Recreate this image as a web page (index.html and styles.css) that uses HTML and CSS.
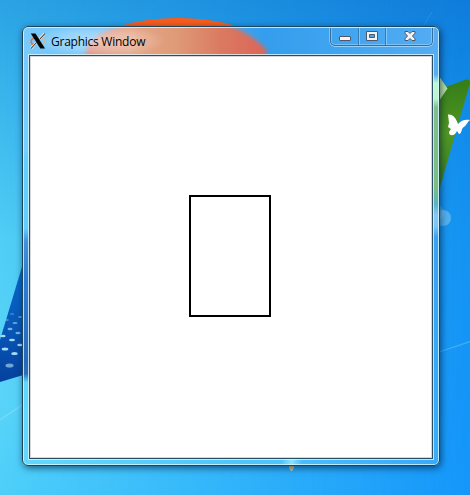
FILE: index.html
```html
<!DOCTYPE html>
<html lang="en">
<head>
<meta charset="utf-8">
<title>Graphics Window</title>
<link rel="stylesheet" href="styles.css">
</head>
<body>
<main class="desktop">
  <svg class="wallpaper" viewBox="0 0 470 495" aria-hidden="true">
    <defs>
      <filter id="soft" x="-50%" y="-50%" width="200%" height="200%"><feGaussianBlur stdDeviation=".6"/></filter>
      <linearGradient id="navy" x1="0" y1="0" x2="0" y2="1"><stop offset="0" stop-color="#0872d2"/><stop offset=".6" stop-color="#0758b9"/><stop offset="1" stop-color="#06419e"/></linearGradient>
      <linearGradient id="leaf" x1="0" y1="0" x2="0" y2="1"><stop offset="0" stop-color="#347d18"/><stop offset=".5" stop-color="#519723"/><stop offset="1" stop-color="#397e20"/></linearGradient>
    </defs>
    <ellipse cx="178" cy="53" rx="91" ry="35" fill="#f95c1c"/>
    <path d="M30 240 0 340v42l30-9z" fill="url(#navy)"/>
    <g fill="#a4daf3" filter="url(#soft)">
      <ellipse cx="12" cy="314" rx="2.2" ry="1" opacity=".3"/><ellipse cx="20" cy="317" rx="2" ry="1" opacity=".5"/>
      <ellipse cx="7" cy="320" rx="2" ry="1" opacity=".4"/><ellipse cx="15" cy="323" rx="2.5" ry="1" opacity=".6"/>
      <ellipse cx="10" cy="329" rx="2.5" ry="1.2" opacity=".7"/><ellipse cx="18" cy="333" rx="2.6" ry="1.2" opacity=".7"/>
      <ellipse cx="3" cy="336" rx="2.6" ry="1.2"/><ellipse cx="12" cy="340" rx="3" ry="1.3"/>
      <ellipse cx="20" cy="345" rx="2.8" ry="1.3"/><ellipse cx="5" cy="349" rx="3.3" ry="1.5"/>
      <ellipse cx="14.500" cy="353.500" rx="3.200" ry="1.600"/><ellipse cx="9.500" cy="365.500" rx="4" ry="2" opacity=".65"/>
    </g>
    <path d="M0 420 22 405" stroke="#a6e8fb" stroke-width="1.500" opacity=".35"/>
    <path d="M440 89 466 79.500Q470 79 470 83L440 187z" fill="url(#leaf)"/>
    <path d="M439 76 447.500 88.500 439 101z" fill="#b8e29c"/>
    <path d="M448 114.500C453 114 456 118 458 124 461 120 466 119 470 120 467 122 467 125 464 127 461 128 462 134 459 134L457 131C455 136 449 137 449 132L451 129 448 127 449 123z" fill="#fff"/>
    <circle cx="435" cy="213" r="9" fill="#8dceed" opacity=".35"/><circle cx="443" cy="218" r="8" fill="#8dceed" opacity=".5"/>
    <path d="M439 352 470 341.500" stroke="#6cc6fa" stroke-width="1.300" opacity=".5"/>
    <path d="M424 25 432 12" stroke="#76c4f3" opacity=".2"/>
    <path d="M289 465h5v3l-2 3h-1l-2-3z" fill="#d8c98c"/>
  </svg>

  <section class="window">
    <svg class="glass" viewBox="22 26 418 440" aria-hidden="true">
      <defs>
        <linearGradient id="top" x2="1"><stop offset="0" stop-color="#78c9fb"/><stop offset=".3" stop-color="#69bdf5"/><stop offset=".58" stop-color="#349ded"/><stop offset=".8" stop-color="#43a6f1"/><stop offset="1" stop-color="#55acf2"/></linearGradient>
        <linearGradient id="left" x2="0" y2="1"><stop offset="0" stop-color="#78c9fb"/><stop offset=".28" stop-color="#75d0ff"/><stop offset=".3" stop-color="#62d0fb"/><stop offset=".46" stop-color="#61cffc"/><stop offset=".49" stop-color="#4390dc"/><stop offset=".57" stop-color="#2f7ed3"/><stop offset=".76" stop-color="#2968b9"/><stop offset=".79" stop-color="#2b6dbd"/><stop offset=".81" stop-color="#60d6fb"/><stop offset="1" stop-color="#65d8fb"/></linearGradient>
        <linearGradient id="right" x2="0" y2="1"><stop offset="0" stop-color="#55acf2"/><stop offset=".11" stop-color="#57adf2"/><stop offset=".13" stop-color="#bcf8d6"/><stop offset=".165" stop-color="#b8f6ca"/><stop offset=".185" stop-color="#82bd8f"/><stop offset=".37" stop-color="#7abc83"/><stop offset=".405" stop-color="#56b4c3"/><stop offset=".43" stop-color="#83c9f6"/><stop offset=".455" stop-color="#7bc5f7"/><stop offset=".48" stop-color="#39a2f2"/><stop offset="1" stop-color="#39adfb"/></linearGradient>
        <linearGradient id="bottom" x2="1"><stop offset="0" stop-color="#65d8fb"/><stop offset=".55" stop-color="#4dc5fb"/><stop offset=".62" stop-color="#4dc4fb"/><stop offset=".645" stop-color="#8be2ff"/><stop offset=".67" stop-color="#48bdfc"/><stop offset="1" stop-color="#39a9fa"/></linearGradient>
        <linearGradient id="sun" x2="1"><stop offset="0" stop-color="#dc8573"/><stop offset=".25" stop-color="#e5a688"/><stop offset=".5" stop-color="#df9b78"/><stop offset=".75" stop-color="#db7961"/><stop offset="1" stop-color="#dc6557"/></linearGradient>
        <radialGradient id="glow"><stop offset="0" stop-color="#fff" stop-opacity=".48"/><stop offset=".6" stop-color="#fff" stop-opacity=".25"/><stop offset="1" stop-color="#fff" stop-opacity="0"/></radialGradient>
        <filter id="blur"><feGaussianBlur stdDeviation="2.200"/></filter>
        <clipPath id="bar"><path d="M22 26h418v29H22z"/></clipPath>
      </defs>
      <path d="M22 26h418v30H22z" fill="url(#top)"/>
      <path d="M22 26h8v440h-8z" fill="url(#left)"/>
      <path d="M432 26h8v440h-8z" fill="url(#right)"/>
      <path d="M22 458h418v8H22z" fill="url(#bottom)"/>
      <g clip-path="url(#bar)">
        <path d="M84 60Q87 37 112 29Q178 5 238 29Q256 38 267 50L264 60z" fill="url(#sun)" filter="url(#blur)"/>
        <ellipse cx="99" cy="41" rx="66" ry="17" fill="url(#glow)"/>
      </g>
    </svg>

    <header class="titlebar">
      <svg class="app-icon" viewBox="0 0 16 16" aria-hidden="true">
        <path d="M5.500 4.500C-.5 6 0 12 5.500 12" fill="none" stroke="#ed6c3d" stroke-width="1.500"/>
        <path d="M11 4.500C16.500 6 15.500 11 9 12.500" fill="none" stroke="#d8b98a" stroke-width="1.200"/>
        <path d="M14.500.5 9 7M6.500 9.500 1 15.500" stroke="#eee" stroke-width="2.500"/>
        <path d="M15 .5 9.500 6.500M6.500 9.500 1 15.500" stroke="#333" stroke-width="1.100"/>
        <path d="M.8.500H5.500L15 15.500H10.300z" fill="#050505"/>
      </svg>
      <h1 class="title">Graphics Window</h1>
      <div class="controls">
        <button class="control minimize" aria-label="Minimize"><svg viewBox="0 0 12 11"><rect x=".5" y="5.500" width="11" height="4" rx=".5" fill="#f5f5f5" stroke="#535666"/></svg></button>
        <button class="control maximize" aria-label="Maximize"><svg viewBox="0 0 12 11"><path d="M.5.500h11v9H.5zM3.500 3.500v3h5v-3z" fill="#f2f2f2" fill-rule="evenodd" stroke="#535666" stroke-linejoin="round"/></svg></button>
        <button class="control close" aria-label="Close"><svg viewBox="0 0 12 11"><path d="M1 .5h3l2 2 2-2h3v1.700L8.500 5 11 7.800v1.700H8l-2-2-2 2H1V7.800L3.500 5 1 2.200z" fill="#f2f2f2" stroke="#535666" stroke-linejoin="round"/></svg></button>
      </div>
    </header>
    <div class="canvas"><div class="rectangle"></div></div>
  </section>
</main>
</body>
</html>
```
FILE: styles.css
```css
* { box-sizing: border-box; }

body { margin: 0; }

.desktop {
  position: relative;
  width: 470px;
  height: 495px;
  padding: 26px 30px 29px 22px;
  overflow: hidden;
  background: linear-gradient(#0f7cdb, #118ae8 20%, #1593f2 48%, #1497fb);
}

.desktop::before {
  content: "";
  position: absolute;
  inset: 0;
  background: linear-gradient(#2ba3e3, #3ab5ec 20%, #50cef5 48%, #5ad4f8 80%, #4dcffa);
  mask-image: linear-gradient(to right, #000, transparent);
}

.wallpaper {
  position: absolute;
  inset: 0;
  width: 470px;
  height: 495px;
}

.window {
  position: relative;
  width: 418px;
  height: 440px;
  padding: 1px 7px 7px;
  border-radius: 6px;
  box-shadow: 1px 2px 7px rgba(0, 25, 55, .65);
}

.window::after {
  content: "";
  position: absolute;
  inset: 0;
  border: 1px solid #1c455e;
  border-radius: 6px;
  box-shadow: inset 0 0 0 1px rgba(220, 246, 255, .8);
  pointer-events: none;
}

.glass {
  position: absolute;
  inset: 0;
  width: 418px;
  height: 440px;
  border-radius: 6px;
}

.titlebar {
  position: relative;
  display: flex;
  height: 28px;
}

.app-icon {
  width: 16px;
  height: 16px;
  margin: 6px 5px 0 1px;
}

.title {
  margin: 6px 0 0;
  font: 400 12px/18px "Open Sans", "Noto Sans", sans-serif;
  letter-spacing: -.25px;
  white-space: nowrap;
  color: #000;
}

.controls {
  display: flex;
  width: 103px;
  height: 19px;
  margin-left: auto;
  border: 1px solid #356d9c;
  border-top: 0;
  border-radius: 0 0 5px 5px;
  box-shadow: 0 1px 0 rgba(185, 225, 252, .7), -1px 0 0 rgba(185, 225, 252, .5), 1px 0 0 rgba(185, 225, 252, .5), inset 0 0 0 1px rgba(170, 217, 252, .5);
}

.control {
  display: flex;
  justify-content: center;
  padding: 4px 0 0;
  border: 0;
  border-left: 1px solid #3c79ac;
  background: none;
  box-shadow: inset 1px 0 0 rgba(170, 217, 252, .6);
}

.control svg { flex: none; width: 12px; height: 11px; }

.minimize { width: 27px; padding-right: 7px; padding-left: 8px; border-left: 0; box-shadow: none; }
.maximize { width: 27px; }
.close { width: 47px; padding-left: 1px; }

.canvas {
  position: relative;
  display: grid;
  width: 404px;
  height: 404px;
  padding: 139px 0 0 159px;
  border: 1px solid #294e66;
  background: #fff;
  box-shadow: 0 0 0 1px rgba(220, 246, 255, .8), inset 0 0 0 1px #d6d6d8;
}

.rectangle {
  width: 82px;
  height: 122px;
  border: 2px solid #000;
}
```
